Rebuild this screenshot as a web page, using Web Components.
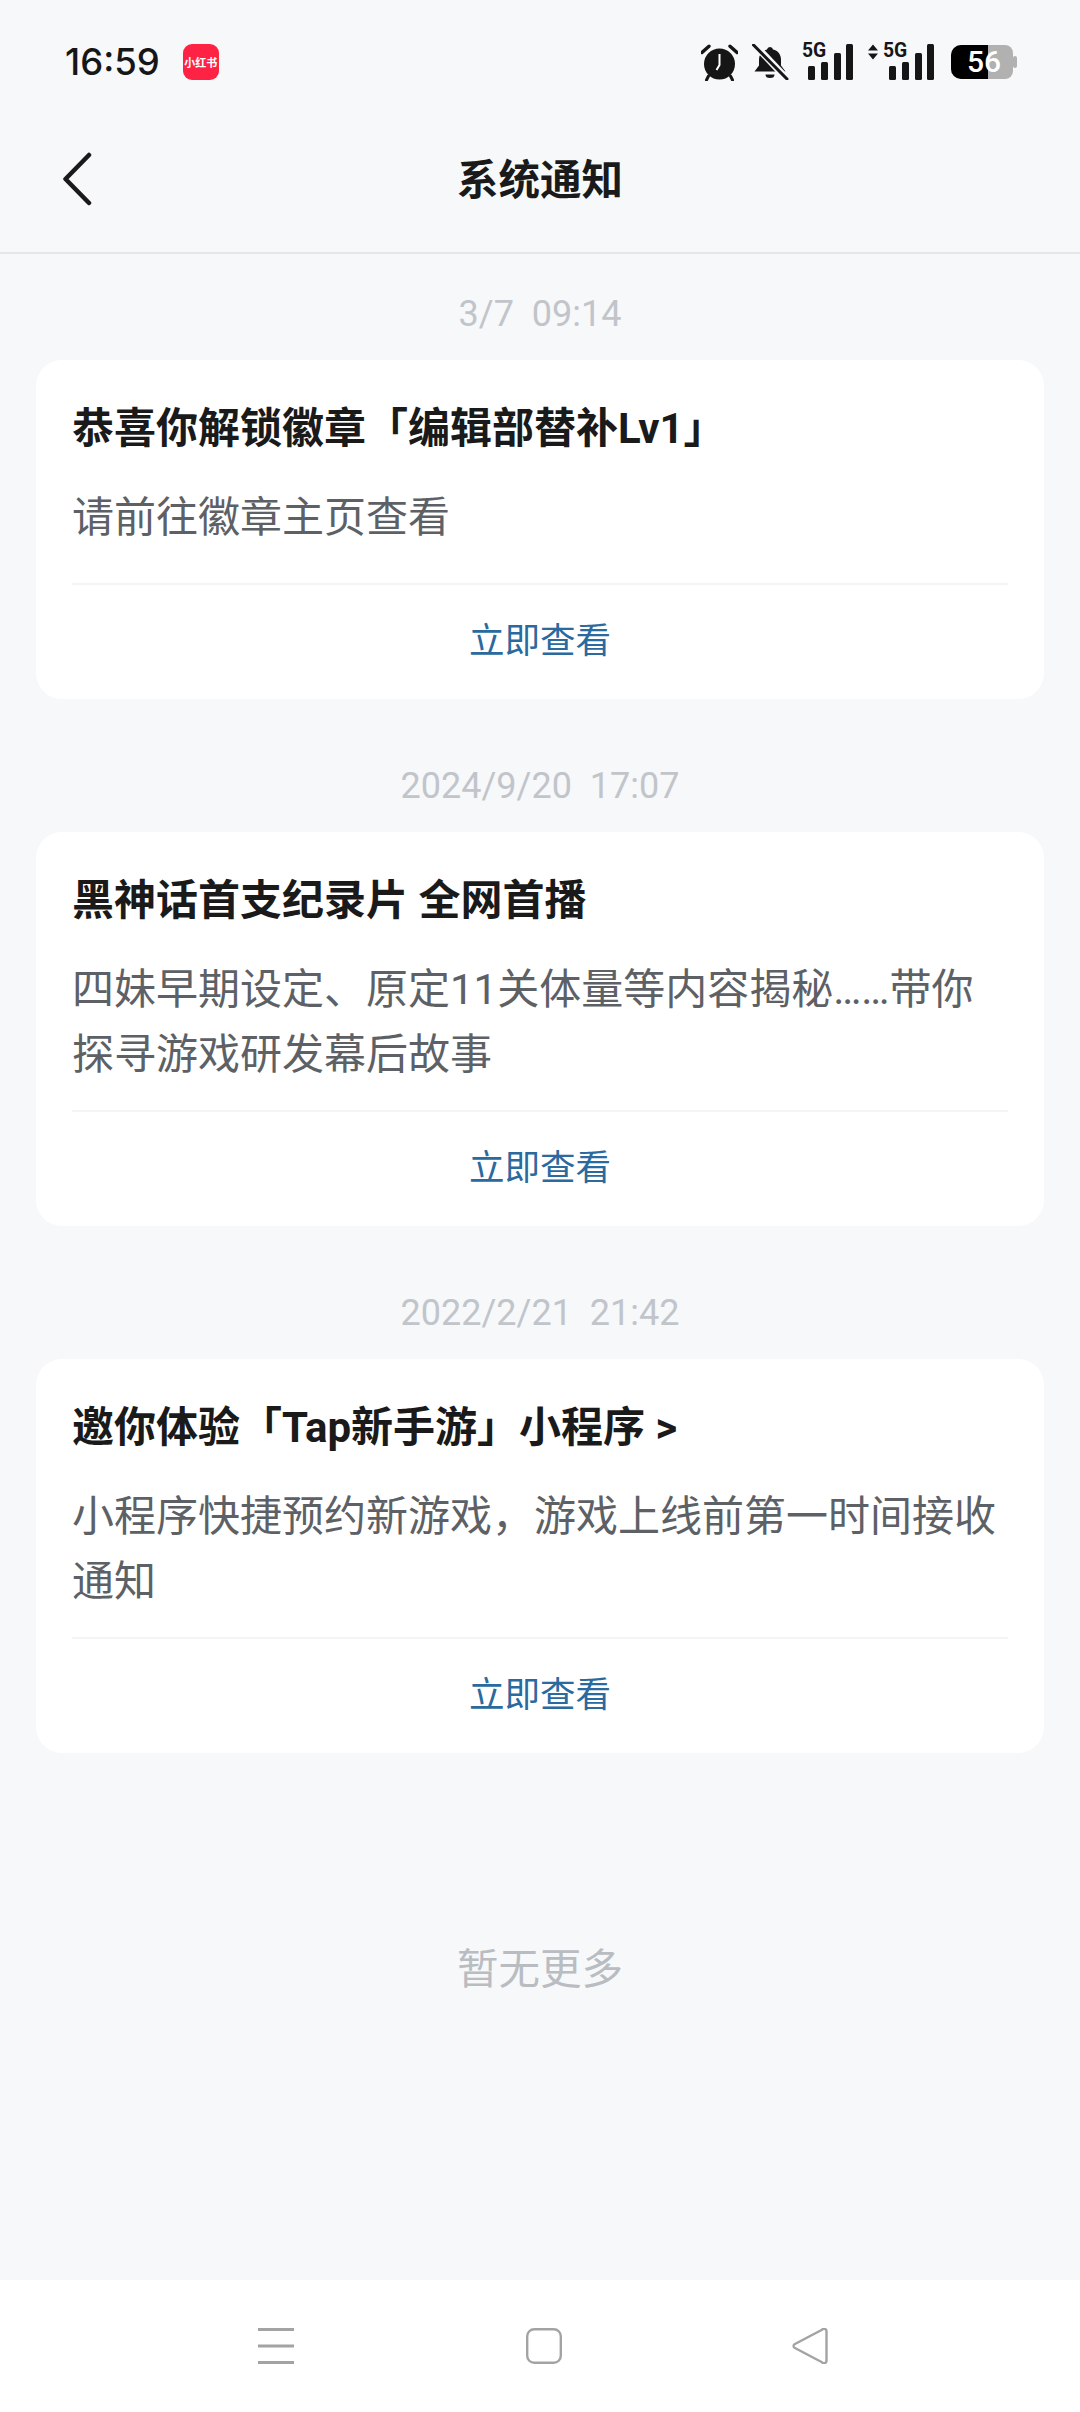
<!DOCTYPE html>
<html lang="zh">
<head>
<meta charset="utf-8">
<title>系统通知</title>
<style>
  html, body { margin: 0; height: 100%; }
  body { font-family: "Noto Sans CJK SC", "Noto Sans", sans-serif; background: #f7f8fa; }
  #app { display: flex; flex-direction: column; height: 2412px; }
</style>
</head>
<body>
<div id="app">
  <status-bar></status-bar>
  <title-bar>系统通知</title-bar>
  <notice-list>
    <notice-item date="3/7&#160;&#160;09:14">
      <span slot="title">恭喜你解锁徽章「编辑部替补Lv1」</span>
      请前往徽章主页查看
    </notice-item>
    <notice-item date="2024/9/20&#160;&#160;17:07">
      <span slot="title">黑神话首支纪录片 全网首播</span>
      四妹早期设定、原定11关体量等内容揭秘……带你探寻游戏研发幕后故事
    </notice-item>
    <notice-item date="2022/2/21&#160;&#160;21:42">
      <span slot="title">邀你体验「Tap新手游」小程序 &gt;</span>
      小程序快捷预约新游戏，游戏上线前第一时间接收通知
    </notice-item>
  </notice-list>
  <nav-bar></nav-bar>
</div>

<script>
// barra de estado: hora, logo e iconos
class StatusBar extends HTMLElement {
  constructor() {
    super();
    this.attachShadow({mode: 'open'}).innerHTML = `
      <style>
        :host { display: flex; align-items: center; height: 124px; padding: 0 63px 0 65px; box-sizing: border-box; color: #161616; flex: none; }
        .time { font: 500 36.500px/1 Inter, Roboto, sans-serif; }
        .logo { width: 36px; height: 36px; margin-left: 23px; border-radius: 9px; background: #fe2344; color: #fff; display: flex; align-items: center; justify-content: center; font: 700 11px/1 "Noto Sans CJK SC", sans-serif; white-space: nowrap; }
        .icons { margin-left: auto; display: flex; align-items: center; }
        svg { display: block; }
        .net { position: relative; display: block; height: 36px; }
        .net b { position: absolute; top: -4px; left: 0; font: 700 21px/1 Roboto, sans-serif; transform: scaleX(.92); transform-origin: 0 0; }
        .net.two b { left: 15px; }
        .batt { position: relative; width: 66px; height: 34px; }
        .batt span { position: absolute; top: 0; left: 0; width: 66px; text-align: center; font: 500 30px/34px Roboto, sans-serif; color: #fff; }
      </style>
      <span class="time">16:59</span>
      <span class="logo">小红书</span>
      <div class="icons">
        <svg width="37" height="38" viewBox="0 0 37 38">
          <circle cx="18.500" cy="21" r="15.500" fill="#161616"/>
          <path d="M1 9.500 8 3.200M29 3.200 36 9.500" stroke="#161616" stroke-width="3.400" stroke-linecap="round"/>
          <path d="M7.500 33 5.500 37M29.500 33 31.500 37" stroke="#161616" stroke-width="3" stroke-linecap="round"/>
          <path d="M18.500 11V22L15.500 27" fill="none" stroke="#fff" stroke-width="2"/>
        </svg>
        <svg width="37" height="36" viewBox="0 0 37 36" style="margin-left:14px">
          <path d="M18 3a3 3 0 0 1 3 2.600c5 1.200 8 5 8 10v6l4.500 5.900H2.500L7 21.500v-6c0-5 3-8.800 8-10A3 3 0 0 1 18 3Z" fill="#161616"/>
          <path d="M13.500 30.500h9a4.500 3.500 0 0 1-9 0Z" fill="#161616"/>
          <path d="M1 -1 36 36" stroke="#f7f8fa" stroke-width="7"/>
          <path d="M1.500 1 35 35" stroke="#161616" stroke-width="3" stroke-linecap="round"/>
        </svg>
        <span class="net" style="width:51px;margin-left:13px">
          <b>5G</b>
          <svg width="51" height="36" viewBox="0 0 51 36" fill="#161616">
            <rect x="6" y="22" width="7" height="14" rx="1.500"/>
            <rect x="19" y="18" width="7" height="18" rx="1.500"/>
            <rect x="32" y="9" width="7" height="27" rx="1.500"/>
            <rect x="44" y="0" width="7" height="36" rx="1.500"/>
          </svg>
        </span>
        <span class="net two" style="width:66px;margin-left:15px">
          <b>5G</b>
          <svg width="66" height="36" viewBox="0 0 66 36" fill="#161616">
            <path d="M0 6.500 5 .5l5 6ZM0 9.500l5 6 5-6Z"/>
            <rect x="21" y="22" width="7" height="14" rx="1.500"/>
            <rect x="34" y="18" width="7" height="18" rx="1.500"/>
            <rect x="47" y="9" width="7" height="27" rx="1.500"/>
            <rect x="59" y="0" width="7" height="36" rx="1.500"/>
          </svg>
        </span>
        <span class="batt" style="margin-left:17px">
          <svg width="66" height="34" viewBox="0 0 66 34">
            <path d="M10 0H54a8 8 0 0 1 8 8V26a8 8 0 0 1-8 8H10a10 10 0 0 1-10-10V10A10 10 0 0 1 10 0Z" fill="#b1b1b1"/>
            <path d="M10 0H37V34H10A10 10 0 0 1 0 24V10A10 10 0 0 1 10 0Z" fill="#000"/>
            <rect x="62" y="11" width="4" height="12" rx="2" fill="#b1b1b1"/>
          </svg>
          <span>56</span>
        </span>
      </div>`;
  }
}
customElements.define('status-bar', StatusBar);

// cabecera con flecha y titulo centrado
class TitleBar extends HTMLElement {
  constructor() {
    super();
    this.attachShadow({mode: 'open'}).innerHTML = `
      <style>
        :host { display: grid; grid-template-columns: 1fr auto 1fr; align-items: center; height: 110px; padding-bottom: 18px; border-bottom: 2px solid #e4e6e9; color: #1a1a1a; flex: none; }
        .back { padding-left: 63px; display: flex; }
        .title { font: 700 41.500px/1 "Noto Sans CJK SC", sans-serif; margin-top: -2px; }
      </style>
      <div class="back">
        <svg width="30" height="56" viewBox="0 0 30 56" fill="none">
          <path d="M26 4 2.500 28 26 52" stroke="#1a1a1a" stroke-width="4.500" stroke-linecap="round" stroke-linejoin="round"/>
        </svg>
      </div>
      <div class="title"><slot></slot></div>
      <div></div>`;
  }
}
customElements.define('title-bar', TitleBar);

class NoticeList extends HTMLElement {
  constructor() {
    super();
    this.attachShadow({mode: 'open'}).innerHTML = `
      <style>
        :host { display: flex; flex-direction: column; flex: 1; padding: 12px 36px 0; gap: 39px; color: #1a1a1a; }
        .end { height: 130px; margin-top: 109px; text-align: center; font: 400 41.500px/130px "Noto Sans CJK SC", sans-serif; color: #b9bdc2; }
      </style>
      <slot></slot>
      <div class="end">暂无更多</div>`;
  }
}
customElements.define('notice-list', NoticeList);

// una notificacion: fecha + tarjeta
class NoticeItem extends HTMLElement {
  static get observedAttributes() { return ['date']; }
  constructor() {
    super();
    this.attachShadow({mode: 'open'}).innerHTML = `
      <style>
        :host { display: block; }
        .date { height: 94px; text-align: center; font: 400 36px/96px Roboto, sans-serif; color: #c1c5ca; }
        .card { background: #fff; border-radius: 26px; padding: 0 36px; }
        .title { padding-top: 41px; height: 55px; font: 700 42px/55px Roboto, "Noto Sans CJK SC", sans-serif; color: #1a1a1a; white-space: nowrap; }
        .body { margin-top: 29px; min-height: 98px; box-sizing: border-box; padding-bottom: 23px; font: 400 42px/65px Roboto, "Noto Sans CJK SC", sans-serif; color: #5d6166; }
        .action { border-top: 2px solid #f3f4f5; height: 114px; display: flex; align-items: center; justify-content: center; font: 400 35.500px/1 Roboto, "Noto Sans CJK SC", sans-serif; color: #2a6a9e; }
      </style>
      <div class="date"></div>
      <div class="card">
        <div class="title"><slot name="title"></slot></div>
        <div class="body"><slot></slot></div>
        <div class="action">立即查看</div>
      </div>`;
  }
  attributeChangedCallback(attrName, oldValue, newValue) {
    if (oldValue != newValue) this.shadowRoot.querySelector('.date').textContent = newValue;
  }
}
customElements.define('notice-item', NoticeItem);

class NavBar extends HTMLElement {
  constructor() {
    super();
    this.attachShadow({mode: 'open'}).innerHTML = `
      <style>
        :host { display: flex; height: 132px; flex: none; background: #fff; box-sizing: border-box; padding: 48px 252px 0 258px; justify-content: space-between; align-items: flex-start; }
        svg { display: block; }
      </style>
      <svg width="36" height="36" viewBox="0 0 36 36" fill="#a3a3a3">
        <rect x="0" y="0" width="36" height="3"/>
        <rect x="0" y="16.500" width="36" height="3"/>
        <rect x="0" y="33" width="36" height="3"/>
      </svg>
      <svg width="36" height="36" viewBox="0 0 36 36" fill="none" style="margin-left:2px">
        <rect x="1.200" y="1.200" width="33.600" height="33.600" rx="7" stroke="#a3a3a3" stroke-width="2.400"/>
      </svg>
      <svg width="36" height="36" viewBox="0 0 36 36" fill="none">
        <path d="M30 1.700 2.500 16.300a2 2 0 0 0 0 3.400L30 34.300a2.500 2.500 0 0 0 4.500-1.600V3.300A2.500 2.500 0 0 0 30 1.700Z" stroke="#a3a3a3" stroke-width="2.400" stroke-linejoin="round"/>
      </svg>`;
  }
}
customElements.define('nav-bar', NavBar);
</script>
</body>
</html>
